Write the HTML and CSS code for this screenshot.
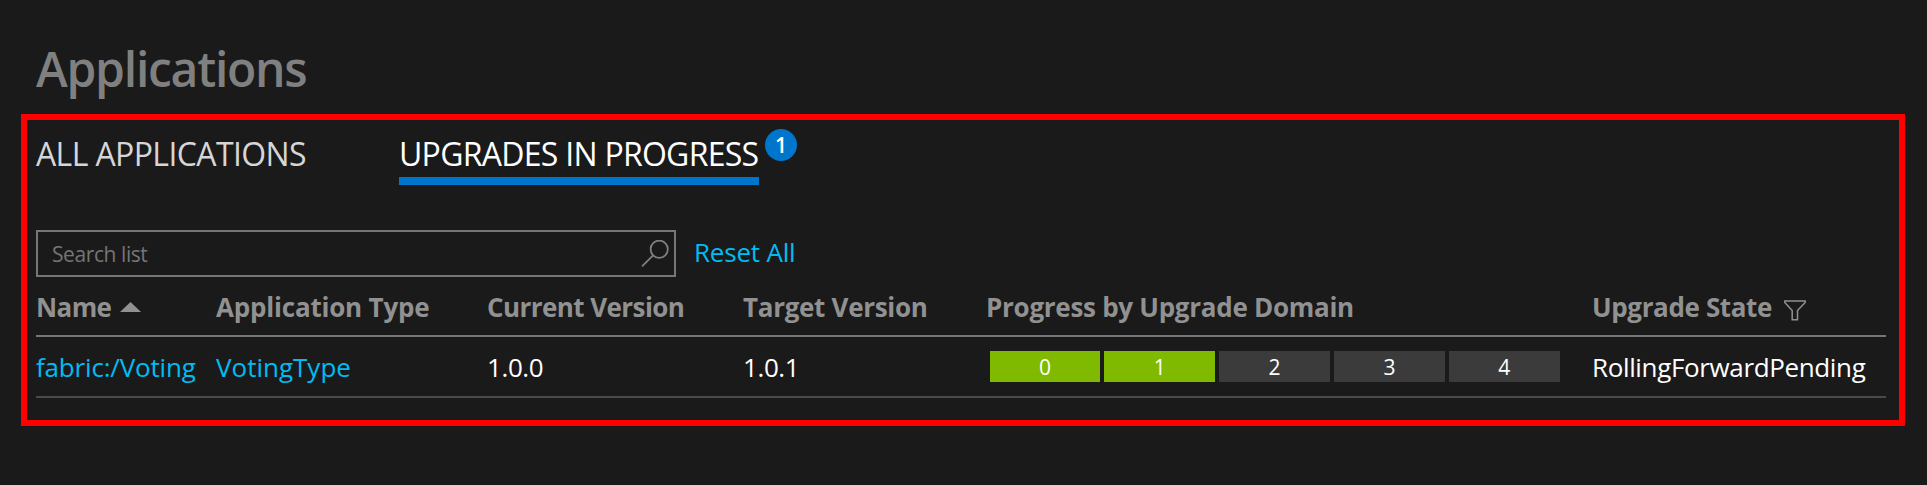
FILE: index.html
```html
<!DOCTYPE html>
<html lang="en">
<head>
<meta charset="utf-8">
<title>Applications</title>
<link rel="stylesheet" href="styles.css">
</head>
<body>
<main class="page">
  <h1 class="title">Applications</h1>
  <section class="panel">
    <nav class="tabs">
      <a class="tab tab-all">ALL APPLICATIONS</a>
      <a class="tab tab-active">UPGRADES IN PROGRESS<span class="badge">1</span></a>
    </nav>
    <div class="toolbar">
      <div class="search">
        <span class="placeholder">Search list</span>
        <svg class="search-icon" width="28" height="28" viewBox="0 0 28 28"><circle cx="18.2" cy="9.2" r="8.6"/><path d="M12.1 15.3 1 26.4"/></svg>
      </div>
      <a class="link reset">Reset All</a>
    </div>
    <div class="table">
      <div class="row head">
        <div class="cell"><span class="h-name">Name</span><svg class="sort" width="21" height="10" viewBox="0 0 21 10"><path d="M0 10 10.5 0 21 10Z"/></svg></div>
        <div class="cell"><span class="h-type">Application Type</span></div>
        <div class="cell"><span class="h-current">Current Version</span></div>
        <div class="cell"><span class="h-target">Target Version</span></div>
        <div class="cell"><span class="h-progress">Progress by Upgrade Domain</span></div>
        <div class="cell"><span class="h-state">Upgrade State</span><svg class="filter" width="22" height="21" viewBox="0 0 22 21"><path d="M.8 1H21.2V2.5L13.5 10.5V19.8H8.2V10.5L.8 2.5Z"/></svg></div>
      </div>
      <div class="row body">
        <div class="cell"><a class="link c-name">fabric:/Voting</a></div>
        <div class="cell"><a class="link">VotingType</a></div>
        <div class="cell"><span class="c-version">1.0.0</span></div>
        <div class="cell"><span class="c-version">1.0.1</span></div>
        <div class="cell domains">
          <span class="domain done">0</span><span class="domain done">1</span><span class="domain">2</span><span class="domain">3</span><span class="domain">4</span>
        </div>
        <div class="cell"><span class="c-state">RollingForwardPending</span></div>
      </div>
    </div>
  </section>
</main>
</body>
</html>
```
FILE: styles.css
```css
* { box-sizing: border-box; }
body { margin: 0; background: #1a1a1a; color: #fff; font-family: "Open Sans", "Noto Sans", sans-serif; }
.page { height: 485px; padding: 36px 22px 0 21px; overflow: hidden; }
.title { margin: 0 0 12px 15px; height: 66px; line-height: 66px; font-size: 48px; font-weight: 600; letter-spacing: -1.25px; color: #808080; }
.panel { height: 312px; border: 6px solid #f00; padding: 0 13px 0 9px; }
.tabs { display: flex; gap: 93px; height: 65px; }
.tab { position: relative; height: 65px; padding-top: 10px; line-height: 47px; font-size: 32px; color: #d6d6d6; white-space: nowrap; }
.tab-all { width: 270px; letter-spacing: -.62px; }
.tab-active { width: 360px; color: #fff; letter-spacing: -.72px; border-bottom: 8px solid #0075cc; }
.badge { position: absolute; left: 366px; top: 9px; width: 32px; height: 32px; border-radius: 50%; background: #0075cc; line-height: 32px; font-size: 21px; font-weight: 600; text-align: center; letter-spacing: 0; }
.toolbar { display: flex; align-items: center; margin-top: 45px; gap: 18px; height: 47px; }
.search { display: flex; align-items: center; justify-content: space-between; width: 640px; height: 47px; border: 2px solid #767676; padding: 0 5px 0 14px; }
.placeholder { font-size: 21px; letter-spacing: -.42px; color: #757575; }
.search-icon { fill: none; stroke: #808080; stroke-width: 1.8; }
.link { color: #00bcf2; }
.reset { font-size: 26px; line-height: 45px; height: 47px; letter-spacing: -.2px; }
.row { display: grid; grid-template-columns: 180px 271px 256px 243px 606px 1fr; font-size: 26px; white-space: nowrap; }
.head { height: 60px; padding-top: 2px; border-bottom: 2px solid #767676; color: #919191; font-weight: 700; }
.body { height: 61px; border-bottom: 2px solid #4a4a4a; }
.cell { display: flex; align-items: center; }
.h-name { letter-spacing: -.6px; }
.h-type { letter-spacing: -.2px; }
.h-current { letter-spacing: -.57px; }
.h-target { letter-spacing: -.3px; }
.h-progress { letter-spacing: -.28px; }
.h-state { letter-spacing: -.37px; }
.c-name { letter-spacing: -.18px; }
.c-version { letter-spacing: -.4px; }
.c-state { letter-spacing: -.36px; }
.sort { margin-left: 9px; fill: #919191; }
.filter { margin-left: 12px; margin-top: 6px; fill: none; stroke: #919191; stroke-width: 1.5; }
.domains { gap: 4px; padding: 0 32.3px 0 3.5px; }
.domain { flex: 1; height: 31px; line-height: 33px; font-size: 21px; text-align: center; background: #3b3b3b; }
.done { background: #7fba00; }
```
